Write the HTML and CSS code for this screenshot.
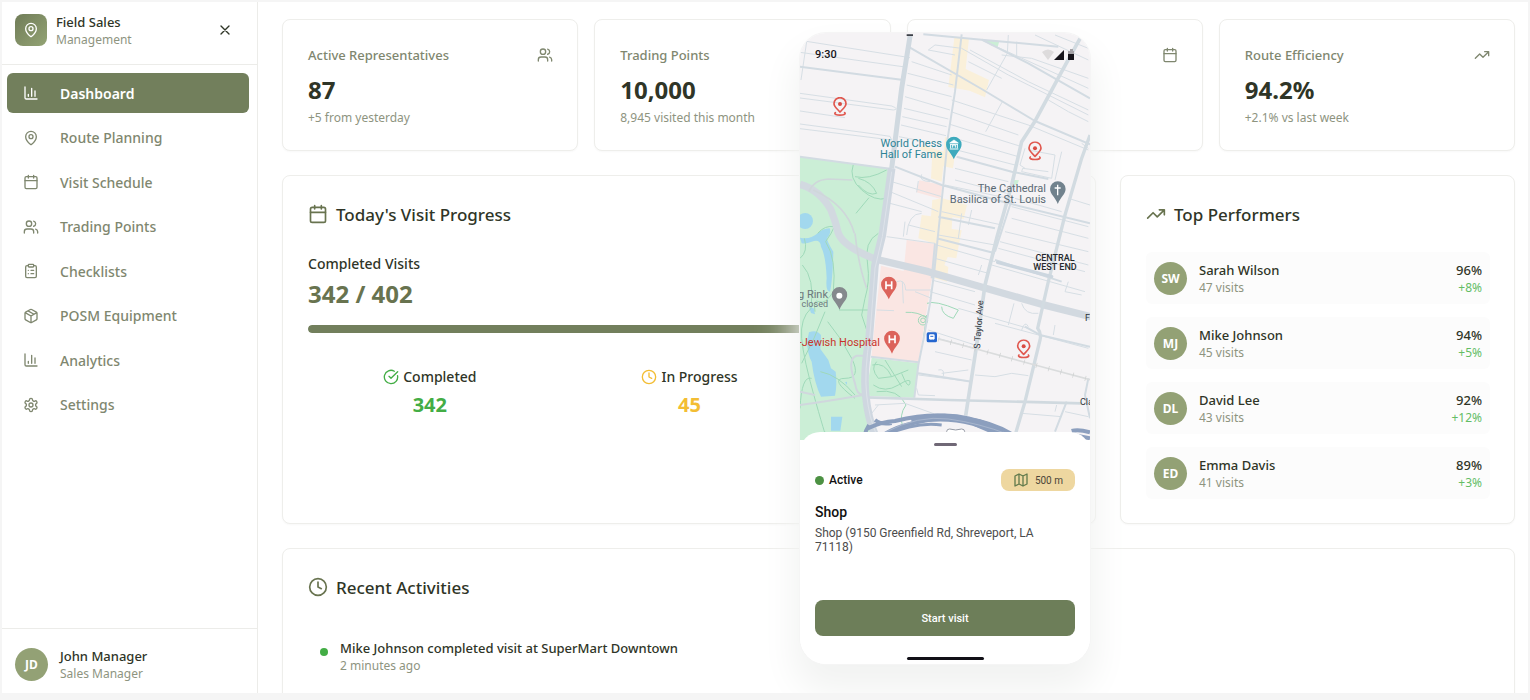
FILE: index.html
```html
<!DOCTYPE html>
<html lang="en">
<head>
<meta charset="utf-8">
<meta name="viewport" content="width=device-width, initial-scale=1">
<title>Field Sales Management</title>
<link rel="stylesheet" href="styles.css">
</head>
<body>
<svg class="sprite" aria-hidden="true">
  <symbol id="pin" viewBox="0 0 24 24"><path d="M20 10c0 5-5.500 10.200-7.400 11.800a1 1 0 0 1-1.200 0C9.500 20.200 4 15 4 10a8 8 0 0 1 16 0"/><circle cx="12" cy="10" r="3"/></symbol>
  <symbol id="chart" viewBox="0 0 24 24"><path d="M3 3v16a2 2 0 0 0 2 2h16M18 17V9M13 17V5M8 17v-3"/></symbol>
  <symbol id="calendar" viewBox="0 0 24 24"><path d="M8 2v4M16 2v4M3 10h18"/><rect x="3" y="4" width="18" height="18" rx="2"/></symbol>
  <symbol id="users" viewBox="0 0 24 24"><path d="M16 21v-2a4 4 0 0 0-4-4H6a4 4 0 0 0-4 4v2M22 21v-2a4 4 0 0 0-3-3.870M16 3.130a4 4 0 0 1 0 7.750"/><circle cx="9" cy="7" r="4"/></symbol>
  <symbol id="clipboard" viewBox="0 0 24 24"><rect x="8" y="2" width="8" height="4" rx="1"/><path d="M16 4h2a2 2 0 0 1 2 2v14a2 2 0 0 1-2 2H6a2 2 0 0 1-2-2V6a2 2 0 0 1 2-2h2M12 11h4M12 16h4M8 11h.01M8 16h.01"/></symbol>
  <symbol id="box" viewBox="0 0 24 24"><path d="M11 21.730a2 2 0 0 0 2 0l7-4A2 2 0 0 0 21 16V8a2 2 0 0 0-1-1.730l-7-4a2 2 0 0 0-2 0l-7 4A2 2 0 0 0 3 8v8a2 2 0 0 0 1 1.730zM12 22V12M3.300 7 12 12l8.700-5M7.500 4.270l9 5.150"/></symbol>
  <symbol id="gear" viewBox="0 0 24 24"><path d="M12.220 2h-.44a2 2 0 0 0-2 2v.18a2 2 0 0 1-1 1.730l-.43.25a2 2 0 0 1-2 0l-.15-.08a2 2 0 0 0-2.730.73l-.22.38a2 2 0 0 0 .73 2.730l.15.1a2 2 0 0 1 1 1.720v.51a2 2 0 0 1-1 1.740l-.15.09a2 2 0 0 0-.73 2.730l.22.38a2 2 0 0 0 2.730.73l.15-.08a2 2 0 0 1 2 0l.43.25a2 2 0 0 1 1 1.730V20a2 2 0 0 0 2 2h.44a2 2 0 0 0 2-2v-.18a2 2 0 0 1 1-1.730l.43-.25a2 2 0 0 1 2 0l.15.08a2 2 0 0 0 2.730-.73l.22-.39a2 2 0 0 0-.73-2.730l-.15-.08a2 2 0 0 1-1-1.740v-.5a2 2 0 0 1 1-1.740l.15-.09a2 2 0 0 0 .73-2.730l-.22-.38a2 2 0 0 0-2.730-.73l-.15.08a2 2 0 0 1-2 0l-.43-.25a2 2 0 0 1-1-1.730V4a2 2 0 0 0-2-2z"/><circle cx="12" cy="12" r="3"/></symbol>
  <symbol id="close" viewBox="0 0 24 24"><path d="M18 6 6 18M6 6l12 12"/></symbol>
  <symbol id="trend" viewBox="0 0 24 24"><path d="M16 7h6v6M22 7l-8.500 8.500-5-5L2 17"/></symbol>
  <symbol id="clock" viewBox="0 0 24 24"><circle cx="12" cy="12" r="10"/><path d="M12 6v6l4 2"/></symbol>
  <symbol id="check" viewBox="0 0 24 24"><path d="M21.800 10A10 10 0 1 1 17 3.330M9 11l3 3L22 4"/></symbol>
  <symbol id="map-icon" viewBox="0 0 24 24"><path d="M3 6l6-3 6 3 6-3v15l-6 3-6-3-6 3zM9 3v15M15 6v15"/></symbol>
  <symbol id="drop" viewBox="0 0 48 70"><path d="M24 1a23 23 0 0 1 23 23c0 15-15 24-23 44C16 48 1 39 1 24A23 23 0 0 1 24 1z"/></symbol>
  <symbol id="stop" viewBox="0 0 44 60"><path d="M22 45C15 37 4 29 4 20a18 18 0 0 1 36 0c0 9-11 17-18 25zM8 47c-10 10 38 10 28 0" fill="none" stroke="#e0584f" stroke-width="5" stroke-linecap="round"/><circle cx="22" cy="21" r="6" fill="#d94c43"/></symbol>
</svg>

<div class="app">
  <aside class="sidebar">
    <header class="brand">
      <span class="brand-logo"><svg class="icon"><use href="#pin"/></svg></span>
      <div class="person"><strong class="name">Field Sales</strong><span class="muted">Management</span></div>
      <button class="close" type="button" aria-label="Close menu"><svg class="icon"><use href="#close"/></svg></button>
    </header>
    <nav class="nav" aria-label="Main">
      <a class="nav-item active" href="#dashboard"><svg class="icon"><use href="#chart"/></svg>Dashboard</a>
      <a class="nav-item" href="#routes"><svg class="icon"><use href="#pin"/></svg>Route Planning</a>
      <a class="nav-item" href="#schedule"><svg class="icon"><use href="#calendar"/></svg>Visit Schedule</a>
      <a class="nav-item" href="#points"><svg class="icon"><use href="#users"/></svg>Trading Points</a>
      <a class="nav-item" href="#checklists"><svg class="icon"><use href="#clipboard"/></svg>Checklists</a>
      <a class="nav-item" href="#equipment"><svg class="icon"><use href="#box"/></svg>POSM Equipment</a>
      <a class="nav-item" href="#analytics"><svg class="icon"><use href="#chart"/></svg>Analytics</a>
      <a class="nav-item" href="#settings"><svg class="icon"><use href="#gear"/></svg>Settings</a>
    </nav>
    <footer class="account">
      <span class="avatar">JD</span>
      <div class="person"><strong class="name">John Manager</strong><span class="muted">Sales Manager</span></div>
    </footer>
  </aside>

  <main class="main">
    <section class="stats">
      <article class="card stat">
        <div class="stat-head"><h2 class="stat-title">Active Representatives</h2><svg class="icon"><use href="#users"/></svg></div>
        <p class="figure">87</p><p class="muted">+5 from yesterday</p>
      </article>
      <article class="card stat">
        <div class="stat-head"><h2 class="stat-title">Trading Points</h2></div>
        <p class="figure">10,000</p><p class="muted">8,945 visited this month</p>
      </article>
      <article class="card stat">
        <div class="stat-head end"><svg class="icon"><use href="#calendar"/></svg></div>
      </article>
      <article class="card stat">
        <div class="stat-head"><h2 class="stat-title">Route Efficiency</h2><svg class="icon"><use href="#trend"/></svg></div>
        <p class="figure">94.2%</p><p class="muted">+2.1% vs last week</p>
      </article>
    </section>

    <section class="panels">
      <article class="card wide">
        <h2 class="card-title"><svg class="icon large"><use href="#calendar"/></svg>Today's Visit Progress</h2>
        <p class="label">Completed Visits</p>
        <p class="figure green">342 / 402</p>
        <div class="track"><div class="bar" style="width:85%"></div></div>
        <div class="breakdown">
          <div class="part done"><p class="part-label"><svg class="icon"><use href="#check"/></svg>Completed</p><p class="part-value">342</p></div>
          <div class="part pending"><p class="part-label"><svg class="icon"><use href="#clock"/></svg>In Progress</p><p class="part-value">45</p></div>
        </div>
      </article>
      <article class="card">
        <h2 class="card-title"><svg class="icon large"><use href="#trend"/></svg>Top Performers</h2>
        <ul class="performers">
          <li class="performer"><span class="avatar">SW</span><div class="person"><strong class="name">Sarah Wilson</strong><span class="muted">47 visits</span></div><div class="score"><span class="name">96%</span><span class="gain">+8%</span></div></li>
          <li class="performer"><span class="avatar">MJ</span><div class="person"><strong class="name">Mike Johnson</strong><span class="muted">45 visits</span></div><div class="score"><span class="name">94%</span><span class="gain">+5%</span></div></li>
          <li class="performer"><span class="avatar">DL</span><div class="person"><strong class="name">David Lee</strong><span class="muted">43 visits</span></div><div class="score"><span class="name">92%</span><span class="gain">+12%</span></div></li>
          <li class="performer"><span class="avatar">ED</span><div class="person"><strong class="name">Emma Davis</strong><span class="muted">41 visits</span></div><div class="score"><span class="name">89%</span><span class="gain">+3%</span></div></li>
        </ul>
      </article>
    </section>

    <section class="card recent">
      <h2 class="card-title"><svg class="icon large"><use href="#clock"/></svg>Recent Activities</h2>
      <div class="activity"><span class="dot"></span><div class="person"><strong class="name">Mike Johnson completed visit at SuperMart Downtown</strong><span class="muted">2 minutes ago</span></div></div>
    </section>
  </main>

  <section class="phone" aria-label="Visit on mobile">
    <div class="map">
      <svg class="map-art" viewBox="0 0 290 407" preserveAspectRatio="xMidYMin slice">
        <rect width="290" height="407" fill="#f5f3f5"/>
        <g transform="scale(.33333) translate(-15 -24)" fill="none" stroke-linejoin="round">
          <g fill="#cbeed6">
            <path d="M15 395 285 430 262 630 240 705 225 945 210 1035 217 1135 232 1245H15z"/>
            <path d="M230 998 371 1015 358 1118 213 1112z"/>
            <path d="M565 45 613 48 608 66 590 62zM655 464l17 2-6 14-14-2z"/>
          </g>
          <g fill="#fae6e3">
            <path d="M335 645 422 657 410 765 370 1013 229 997 258 722 326 738z"/>
            <path d="M373 466 442 480 437 522 364 502z"/>
          </g>
          <g fill="#faf0da">
            <path d="M478 38 522 40 512 132 582 165 570 217 524 197 460 186z"/>
            <path d="M450 336 486 346 474 430 445 424 440 470 408 460 412 385 375 375 380 360 446 380z"/>
            <path d="M442 520 516 540 506 582 472 576 470 612 500 616 484 700 458 696 448 720 460 726 456 770 418 760 420 656 370 640 380 570 408 574 412 525z"/>
          </g>
          <g fill="#a2d8ee">
            <circle cx="30" cy="588" r="24"/>
            <path d="M15 638Q45 645 68 625 80 612 104 610 110 622 96 640 96 650 115 680 113 765 105 800 91 800 95 760 92 690 78 665 76 640 50 650 34 657 20 655 15 650z"/>
            <path d="M42 922Q65 912 78 930L76 972 100 1005 108 1030 122 1040Q127 1080 120 1112L78 1115Q58 1075 50 1010 38 990 36 950zM108 1175h34l-6 42h-28zM42 845l14 5 4 18-12-4zM150 1072l6-2v10z"/>
          </g>
          <g stroke="#9fd9b9" stroke-width="3">
            <path d="M175 418Q160 460 200 495T275 520M180 455Q220 465 275 435M190 460Q230 470 245 505 220 515 190 480M183 565 222 518M250 625Q205 650 218 720 225 770 210 820L200 870 215 915"/>
            <path d="M68 625Q90 600 118 605 110 625 92 650 125 700 115 800 90 840 72 830T60 860M15 700Q40 680 28 640M22 720Q60 760 48 850 15 880 20 940T62 1130 90 1220M20 1015Q60 940 90 860M132 855H220M98 890Q140 940 170 1000T150 1060 180 1120M76 1040Q130 1050 180 1110M15 1150Q20 1050 50 1060"/>
            <path d="M232 1020Q270 1010 290 1055L250 1060Q225 1030 245 1010M290 1055 340 1035M235 1080Q270 1105 310 1080T345 1075 320 1045M270 1005 320 1085M245 1100Q310 1090 333 1140 310 1170 325 1210M332 862Q370 860 393 878M395 870 386 935M396 835Q420 825 490 855L475 880Q440 870 440 845"/>
            <circle cx="384" cy="886" r="14"/><circle cx="384" cy="886" r="7"/>
          </g>
          <g stroke="#d6dee4" stroke-width="3">
            <path d="M15 46 345 98M15 82 330 126M35 50 18 165M15 205 290 243Q315 253 295 255L15 219M15 258 150 278M15 297 210 323 285 334 290 345 15 311M350 110 470 150M338 145 475 180M335 180 470 215M330 215 465 255M327 250 460 282M322 275 455 305M318 300 453 332M312 335 390 350M470 225 700 300 880 375M468 260 670 330M465 298 680 365M480 340 670 395M485 375 660 420M480 430 640 470M480 465 635 505M420 60 400 75 480 90M420 60 500 70 640 150 880 270M520 110 620 160M525 75 700 170 880 255M560 45 880 190M620 90 710 100 880 160M720 30 880 105M780 30 880 70M640 30 637 85 575 195M665 50V95M622 230 572 320M760 225 820 260 880 290M860 355 880 370M690 370 675 420 690 430M700 375 780 390 770 460 680 440 683 430 760 440M800 380 780 465M290 470 440 515M285 500 430 560M285 535 380 560M380 565Q340 565 335 630M370 468 365 502M380 448Q370 468 405 470M450 480 640 520M440 560 620 600M530 555 520 600M500 565 490 640M660 520 800 560M820 520 885 540M650 545 880 605M650 580 880 640M630 620 880 680M615 650 880 720M610 670 870 740M590 720 870 800M425 660 600 710M420 700 580 745M275 635 420 655M330 590 325 635M340 600 420 620M430 630 600 660M490 850 560 870 700 910M600 895 880 970M657 835 640 900M780 900 775 930M820 770 810 800 860 810M560 720 550 750M410 765 540 800M405 800 540 840M245 855 297 857M322 770 325 835M305 770Q330 760 332 795L410 795M360 800 410 820M400 915 540 960M420 980 530 1005M430 940 540 970M370 1050 530 1070M540 1050 600 1055 650 1045 700 1052M440 1045 520 1035M430 1035q20-5 15 18M365 1090 370 1110 420 1112M680 1165 800 1175M780 1160 785 1140M810 1160 880 1175M680 835Q690 870 730 865M680 915q10-30 20-10M240 1140 330 1135 455 1180M230 1165 250 1140"/>
          </g>
          <g stroke="#d2dbe2" stroke-width="6">
            <path d="M345 68 560 192 720 288 885 358M15 125 325 165M385 28 560 44 790 65M560 44 700 115 885 220M300 425 440 480 640 535 885 595M485 395 650 440 760 462M430 575 600 610M500 28 480 200 458 340 445 480 428 640 418 740 405 835 388 930 370 1020 358 1118M425 640 600 685M600 705 800 770M610 712 770 755M370 1045 530 1070M15 395 290 432M228 995 370 1012M420 655 410 760M690 905 735 930 885 965M815 1130 780 1220M880 1060 870 1110 885 1180M650 525 600 680"/>
          </g>
          <path d="M15 478Q75 495 108 555 122 590 130 625 145 665 240 702L400 740 740 838 890 876" stroke="#d2d9e0" stroke-width="22"/>
          <path d="M215 1117 460 1125 860 1135" stroke="#d0d9df" stroke-width="8"/>
          <path d="M15 1140Q90 1130 205 1110 185 1110 180 1075 155 1000 185 992L225 992M15 1100 60 1110" stroke="#d0d7dd" stroke-width="6"/>
          <path d="M42 500Q55 465 100 462L172 465M180 625Q190 720 215 790M55 495Q155 540 178 625" stroke="#cfd7da" stroke-width="5"/>
          <path d="M860 32 800 140 718 292 680 350 650 480 605 640 570 780 545 960 512 1172" stroke="#d2dbe1" stroke-width="11"/>
          <path d="M885 330 860 400 810 570 795 630 760 770 728 910Q740 925 735 945L690 1130 662 1225" stroke="#d2dbe1" stroke-width="10"/>
          <path d="M346 28 320 190 290 430" stroke="#d0d9e0" stroke-width="15"/>
          <path d="M290 430 262 630 240 720 222 945Q205 1040 212 1110T240 1230" stroke="#cfd7e0" stroke-width="23"/>
          <path d="M290 440 262 635 240 730 225 930Q207 1040 215 1110T243 1225" stroke="#dde2e9" stroke-width="3"/>
          <path d="M430 942 500 960 720 1020 885 1064" stroke="#dadcdd" stroke-width="5"/>
          <path d="M430 942 500 960 720 1020 885 1064" stroke="#cdd0d0" stroke-width="16" stroke-dasharray="2 36"/>
          <path d="M608 712 770 755" stroke="#ccd6df" stroke-width="10" stroke-linecap="round"/>
          <g stroke="#8c9fbe" stroke-width="12">
            <path d="M222 1200Q212 1215 208 1235M218 1210Q260 1190 300 1188 420 1160 500 1180 590 1190 655 1230M240 1185Q260 1200 290 1194M265 1230Q310 1200 400 1185 520 1175 620 1232M830 1218Q850 1212 885 1222M845 1232 885 1240" />
            <path d="M350 1190Q440 1165 520 1184T620 1225" stroke-width="20"/>
            <path d="M275 1230Q360 1190 440 1200M540 1200 610 1230" stroke-width="9"/>
          </g>
          <path d="M270 1222Q370 1170 460 1182T640 1228" stroke="#b5c1d5" stroke-width="2"/>
          <path d="M455 1245v-25q0-8 9-8 18 6 36 0 9 0 9 8v25z" fill="#fff" stroke="#969ba5" stroke-width="3"/>
          <path d="M335 28h19v5h-19z" fill="#3d4047"/>
          <use href="#stop" x="113" y="216" width="44" height="60"/><use href="#stop" x="698" y="349" width="44" height="60"/><use href="#stop" x="664" y="943" width="44" height="60"/>
          <use href="#drop" x="452" y="334" width="49" height="71" fill="#3eaabd"/>
          <path d="M464 354 477 345l13 9z" fill="#fff" stroke="#fff" stroke-width="2"/>
          <path d="M464 372h26M467 358v12M487 358v12M473 368v-8h8v8M465 358h24" stroke="#fff" stroke-width="3"/>
          <use href="#drop" x="764" y="468" width="49" height="71" fill="#71828d"/><path d="M788 479v32M779 489h18" stroke="#fff" stroke-width="4"/>
          <use href="#drop" x="109" y="785" width="49" height="71" fill="#85898d"/><circle cx="133" cy="812" r="9" fill="#fff"/>
          <use href="#drop" x="257" y="754" width="49" height="71" fill="#dc635b"/><path d="M273 769v24M290 769v24M273 781h17" stroke="#fff" stroke-width="5"/>
          <use href="#drop" x="266" y="916" width="50" height="72" fill="#dc635b"/><path d="M283 931v24M300 931v24M283 943h17" stroke="#fff" stroke-width="5"/>
          <rect x="395" y="922" width="31" height="30" rx="5" fill="#2466cf"/><rect x="402" y="928" width="17" height="16" rx="4" fill="#fff"/><path d="M406 934h9M405 948l3-4M416 948l-3-4" stroke="#2466cf" stroke-width="3"/>
        </g>
        <g class="place">
          <g fill="#2d8495" text-anchor="end"><text x="142" y="114">World Chess</text><text x="142" y="125">Hall of Fame</text></g>
          <g fill="#5a6973" text-anchor="end"><text x="246" y="159">The Cathedral</text><text x="246" y="170">Basilica of St. Louis</text></g>
          <g fill="#6c777c" text-anchor="end"><text x="28" y="265">g Rink</text><text class="tiny" x="28" y="274">closed</text></g>
          <text fill="#c9342b" x="80" y="313" text-anchor="end">-Jewish Hospital</text>
          <g class="tiny district" text-anchor="middle"><text x="255" y="228">CENTRAL</text><text x="255" y="237">WEST END</text></g>
          <text class="tiny" fill="#30343a" transform="translate(180 316) rotate(-86)">S Taylor Ave</text>
          <text class="tiny" fill="#30343a" x="285" y="288">F</text><text class="tiny" fill="#30343a" x="280" y="372">Cla</text>
        </g>
      </svg>
      <div class="status"><span>9:30</span>
        <svg class="signals" viewBox="0 0 34 12"><path d="M0 3q6-5 12 0l-6 8z" fill="#dddbdc"/><path d="M12 11 22 1v10z" fill="#17151b"/><path d="M26 2h2V0h3v2h1v4h-6z" fill="#a5a3a7"/><path d="M26 5h6v6h-6z" fill="#17151b"/></svg>
      </div>
    </div>
    <div class="sheet">
      <span class="handle"></span>
      <div class="sheet-row"><span class="state"><i class="state-dot"></i>Active</span><span class="distance"><svg class="icon"><use href="#map-icon"/></svg>500 m</span></div>
      <h2 class="shop">Shop</h2>
      <p class="address">Shop (9150 Greenfield Rd, Shreveport, LA 71118)</p>
      <button class="start" type="button">Start visit</button>
      <span class="home"></span>
    </div>
  </section>
</div>
</body>
</html>
```
FILE: styles.css
```css
* { box-sizing: border-box; }
body { margin: 0; height: 100vh; padding: 2px 2px 7px; background: #f5f5f5; color: #2f3527; font-family: "Noto Sans", "Open Sans", sans-serif; font-size: 14px; }
h2, p, ul { margin: 0; padding: 0; }
ul { list-style: none; }
button { border: 0; padding: 0; font: inherit; cursor: pointer; }
.sprite { position: absolute; width: 0; height: 0; }
.icon { width: 16px; height: 16px; flex: none; fill: none; stroke: currentColor; stroke-width: 2; stroke-linecap: round; stroke-linejoin: round; }
.icon.large { width: 20px; height: 20px; color: #68734f; }

.app { position: relative; display: flex; height: 100%; overflow: hidden; background: #fff; }

.sidebar { display: flex; flex-direction: column; flex: 0 0 256px; border-right: 1px solid #ecece9; }
.brand { display: flex; align-items: center; gap: 9px; height: 63px; padding: 0 24px 6px 13px; border-bottom: 1px solid #ecece9; }
.brand-logo { display: grid; place-items: center; width: 32px; height: 32px; border-radius: 8px; background: linear-gradient(135deg, #707c58, #93a374); color: #fff; }
.person { display: flex; flex: 1; flex-direction: column; min-width: 0; }
.name { font-size: 13px; font-weight: 500; line-height: 20px; }
.muted { color: #8e947f; font-size: 12px; line-height: 16px; }
.close { display: grid; background: none; color: #2f3527; }
.nav { display: grid; align-content: space-between; height: 352px; margin: 8px 8px 0 5px; }
.nav-item { display: flex; align-items: center; gap: 21px; height: 40px; padding-left: 16px; border-radius: 6px; color: #7f876f; font-weight: 500; text-decoration: none; }
.nav-item.active { background: #727f5c; color: #fff; font-weight: 600; }
.account { display: flex; align-items: center; gap: 12px; height: 65px; margin-top: auto; padding: 6px 13px 0; border-top: 1px solid #ecece9; }
.avatar { display: grid; place-items: center; flex: none; width: 33px; height: 33px; border-radius: 50%; background: #93a175; color: #fff; font-size: 12px; font-weight: 700; }

.main { flex: 1; min-width: 0; padding: 17px 13px 0 24px; }
.card { padding: 24px 24px 24px 25px; border: 1px solid #eeeeeb; border-radius: 8px; background: #fff; box-shadow: 0 1px 2px #00000008; }
.stats { display: grid; grid-template-columns: repeat(4, 1fr); gap: 16px; }
.stat-head { display: flex; align-items: center; justify-content: space-between; height: 22px; margin-bottom: 8px; color: #7f876f; }
.stat-head.end { justify-content: flex-end; }
.stat-title { font-size: 13px; font-weight: 500; }
.figure { margin-bottom: 4px; font-size: 24px; font-weight: 700; line-height: 32px; }
.green { color: #68734f; }
.panels { display: grid; grid-template-columns: repeat(3, 1fr); gap: 24px; margin: 24px 0; }
.wide { grid-column: span 2; }
.card-title { display: flex; align-items: center; gap: 8px; height: 28px; margin-bottom: 24px; font-size: 17px; font-weight: 500; }
.label { margin-bottom: 4px; padding-top: 2px; font-weight: 500; line-height: 20px; }
.track { height: 8px; margin: 15px 0 34px; overflow: hidden; border-radius: 4px; background: #eceee8; }
.bar { height: 100%; border-radius: 4px; background: #727f5c; }
.breakdown { display: grid; grid-template-columns: repeat(3, 1fr); gap: 16px; text-align: center; }
.part-label { display: flex; align-items: center; justify-content: center; gap: 4px; font-weight: 500; line-height: 20px; }
.part-value { margin-top: 4px; font-size: 20px; font-weight: 700; line-height: 28px; }
.done .icon, .done .part-value { color: #43ad45; }
.pending .icon, .pending .part-value { color: #f3bd34; }

.performers { display: grid; gap: 13px; }
.performer { display: flex; align-items: center; gap: 12px; height: 52px; padding: 0 8px; border-radius: 6px; background: #fcfcfc; }
.score { display: flex; flex-direction: column; text-align: right; }
.gain { color: #63bd65; font-size: 12px; line-height: 16px; }
.activity { display: flex; align-items: center; gap: 12px; padding: 13px 12px; }
.dot { width: 8px; height: 8px; margin-bottom: 9px; border-radius: 50%; background: #43ad45; }

.phone { position: absolute; top: 31px; left: calc(50% + 35px); display: flex; flex-direction: column; width: 290px; overflow: hidden; border-radius: 26px; background: #fff; box-shadow: 0 0 0 1px #f5f5f5, 0 22px 36px 6px #f2f3f2; font-family: Roboto, sans-serif; }
.map { position: relative; }
.map-art { display: block; width: 100%; height: 407px; }
.place { font-size: 11px; }
.tiny { font-size: 9px; }
.district { fill: #25282c; font-weight: 500; }
.status { position: absolute; top: 15px; left: 15px; right: 14px; display: flex; align-items: center; justify-content: space-between; color: #17151b; font-size: 11px; font-weight: 500; line-height: 14px; }
.signals { width: 34px; height: 12px; }
.sheet { position: relative; display: flex; flex-direction: column; height: 232px; margin-top: -8px; padding: 11px 15px 4px; border-radius: 20px 20px 0 0; background: #fff; }
.handle { align-self: center; width: 23px; height: 3px; border-radius: 2px; background: #706876; }
.sheet-row { display: flex; align-items: center; justify-content: space-between; height: 22px; margin: 23px 0 12px; }
.state { display: flex; align-items: center; gap: 5px; color: #111; font-size: 12px; font-weight: 500; }
.state-dot { width: 9px; height: 9px; border-radius: 50%; background: #4c9143; }
.distance { display: flex; align-items: center; gap: 6px; height: 22px; padding: 0 12px; border-radius: 8px; background: #eed7a0; color: #4c4638; font-size: 10px; }
.distance .icon { color: #637b4d; }
.shop { margin-bottom: 5px; color: #111; font-size: 14px; font-weight: 500; line-height: 18px; }
.address { padding-right: 30px; color: #4c4c4c; font-size: 12px; line-height: 14px; }
.start { height: 36px; margin-top: auto; border-radius: 8px; background: #6d7e59; color: #fff; font-size: 11px; font-weight: 500; }
.home { align-self: center; width: 77px; height: 3px; margin-top: 21px; border-radius: 2px; background: #111017; }
```
